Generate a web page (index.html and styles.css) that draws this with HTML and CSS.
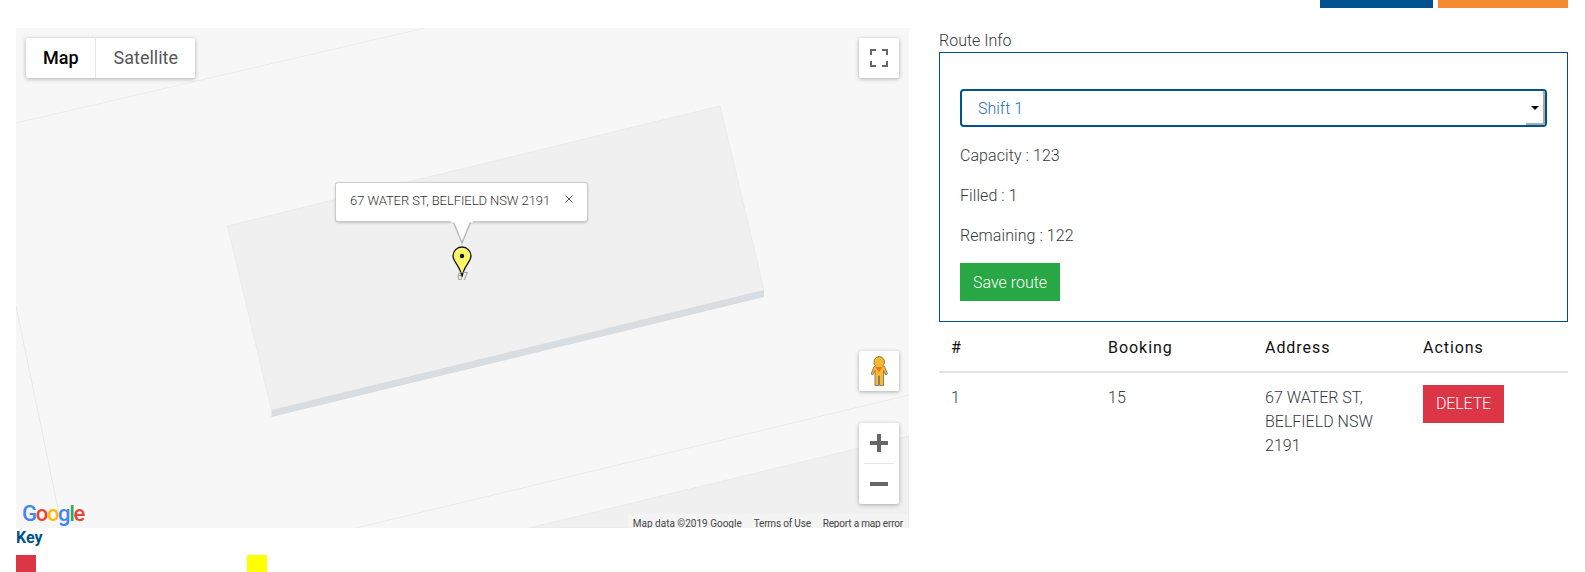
FILE: index.html
```html
<!DOCTYPE html>
<html lang="en">
<head>
<meta charset="utf-8">
<title>Route Info</title>
<link rel="stylesheet" href="styles.css">
</head>
<body>
<div class="topbar">
  <span class="top-btn top-blue"></span>
  <span class="top-btn top-orange"></span>
</div>
<main class="main">
  <section class="left">
    <div class="map">
      <svg class="map-bg" viewBox="0 0 893 500" aria-hidden="true">
        <rect width="893" height="500" fill="#f7f7f7"/>
        <path d="M0 95 L409 0" stroke="#ececec" fill="none"/>
        <path d="M0 278 L46 500" stroke="#e8e8e8" fill="none"/>
        <path d="M340 500 L893 367" stroke="#ebebeb" fill="none"/>
        <path d="M513 500 L893 408 V500 Z" fill="#f0f0f0" stroke="#ebebeb"/>
        <path d="M211.500 198 L704 78 L748 262 L255.500 382 Z" fill="#f0f0f0" stroke="#ebebeb"/>
        <path d="M255.500 382 L748 262 V269 L255.500 389 Z" fill="#d8dde2"/>
      </svg>
      <div class="map-type">
        <span class="type-btn type-on">Map</span>
        <span class="type-btn type-off">Satellite</span>
      </div>
      <button class="ctl ctl-full" aria-label="Fullscreen">
        <svg width="18" height="18" viewBox="0 0 18 18"><path d="M1 6V1H6M12 1H17V6M17 12V17H12M6 17H1V12" fill="none" stroke="#666" stroke-width="2"/></svg>
      </button>
      <button class="ctl ctl-peg" aria-label="Street View">
        <svg class="peg" width="18" height="30" viewBox="0 0 18 30"><path d="M9 .5a5.500 5.500 0 0 1 3.900 9.400l1.600.6 2.900 7.500-1.700.8-2.200-4.300V29.500H9.500V20h-1v9.500H5V14.500l-2.200 4.300-1.700-.8 2.900-7.500 1.600-.6A5.500 5.500 0 0 1 9 .5Z" fill="#fdb827" stroke="#8a7f6a"/><path d="M5.500 11H12.500L9 16.500Z" fill="#e8772e"/></svg>
      </button>
      <div class="ctl ctl-zoom">
        <span class="zoom-btn"><svg width="18" height="18" viewBox="0 0 18 18"><path d="M7 0h4v7h7v4h-7v7H7v-7H0V7h7Z" fill="#666"/></svg></span>
        <span class="zoom-sep"></span>
        <span class="zoom-btn"><svg width="18" height="18" viewBox="0 0 18 18"><path d="M0 7h18v4H0Z" fill="#666"/></svg></span>
      </div>
      <div class="bubble">
        <span class="bubble-text">67 WATER ST, BELFIELD NSW 2191</span>
        <svg class="bubble-close" width="8" height="8" viewBox="0 0 8 8" aria-hidden="true"><path d="M.5.500 7.500 7.500M7.500.500 .5 7.500" stroke="#555" fill="none"/></svg>
      </div>
      <svg class="bubble-tail" width="22" height="24" viewBox="0 0 22 24" aria-hidden="true"><path d="M2 0 L11 22 L20 0 Z" fill="#fff" stroke="#bbb" stroke-width="1.500"/><path d="M0 .5H22" stroke="#fff" stroke-width="2"/></svg>
      <svg class="pin" width="20" height="32" viewBox="0 0 20 32" aria-hidden="true"><path d="M10 1a9 9 0 0 1 9 9c0 6-7 9-9 21C8 19 1 16 1 10a9 9 0 0 1 9-9Z" fill="#fdf569" stroke="#111" stroke-width="1.300"/><circle cx="10" cy="10" r="2.200" fill="#111"/></svg>
      <span class="pin-label">67</span>
      <span class="google"><b class="g-b">G</b><b class="g-r">o</b><b class="g-y">o</b><b class="g-b">g</b><b class="g-g">l</b><b class="g-r">e</b></span>
      <div class="attrib">
        <span>Map data ©2019 Google</span>
        <span class="tight">Terms of Use</span>
        <span class="tight">Report a map error</span>
      </div>
    </div>
    <div class="key">
      <div class="key-title">Key</div>
      <div class="key-row">
        <span class="swatch swatch-red"></span>
        <span class="swatch swatch-yellow"></span>
      </div>
    </div>
  </section>
  <section class="right">
    <div class="route-label">Route Info</div>
    <div class="route-box">
      <div class="select">
        <span>Shift 1</span>
        <span class="select-arrow"></span>
      </div>
      <p class="stat">Capacity : 123</p>
      <p class="stat">Filled : 1</p>
      <p class="stat stat-last">Remaining : 122</p>
      <button class="btn btn-save">Save route</button>
    </div>
    <table class="table">
      <thead>
        <tr><th class="c-a">#</th><th class="c-a">Booking</th><th class="c-b">Address</th><th>Actions</th></tr>
      </thead>
      <tbody>
        <tr>
          <td>1</td>
          <td>15</td>
          <td>67 WATER ST, BELFIELD NSW 2191</td>
          <td><button class="btn btn-delete">DELETE</button></td>
        </tr>
      </tbody>
    </table>
  </section>
</main>
</body>
</html>
```
FILE: styles.css
```css
* { box-sizing: border-box; }
html, body { margin: 0; padding: 0; height: 572px; overflow: hidden; background: #fff; }
body { font-family: Roboto, "Liberation Sans", sans-serif; font-weight: 300; font-size: 16px; line-height: 24px; color: #343a40; }

.topbar { display: flex; justify-content: flex-end; gap: 5px; height: 8px; padding-right: 17px; }
.top-btn { display: block; height: 8px; }
.top-blue { width: 113px; background: #00528f; }
.top-orange { width: 130px; background: #f48b31; }

.main { display: flex; padding: 20px 17px 0 16px; gap: 30px; }
.left { width: 893px; flex: none; }
.right { flex: 1; min-width: 0; }

.map { position: relative; width: 893px; height: 500px; overflow: hidden; background: #f7f7f7; }
.map-bg { display: block; width: 893px; height: 500px; }

.map-type { position: absolute; left: 10px; top: 10px; display: flex; height: 40px; background: #fff; border-radius: 2px; box-shadow: 0 1px 4px rgba(0,0,0,.3); font-weight: 400; font-size: 18px; line-height: 40px; color: #565656; }
.type-btn { padding: 0 17px; }
.type-btn.type-on { padding-right: 16px; font-weight: 500; color: #000; border-right: 1px solid #e6e6e6; }
.type-btn.type-off { padding-left: 18px; }

.ctl { position: absolute; display: flex; align-items: center; justify-content: center; width: 40px; padding: 0; border: 0; background: #fff; border-radius: 2px; box-shadow: 0 1px 4px rgba(0,0,0,.3); }
.ctl-full { left: 843px; top: 10px; height: 40px; }
.ctl-peg { left: 843px; top: 323px; height: 40px; }
.peg { margin-right: 1px; }
.ctl-zoom { left: 843px; top: 395px; height: 81px; flex-direction: column; }
.zoom-btn { display: flex; align-items: center; justify-content: center; height: 40px; width: 40px; }
.zoom-sep { display: block; width: 30px; height: 1px; background: #e6e6e6; }

.bubble { position: absolute; left: 320px; top: 155px; display: flex; align-items: flex-start; width: 251px; height: 38px; padding: 9px 0 0 14px; background: #fff; border-radius: 2px; box-shadow: 0 0 0 1px #ccc, 0 1px 3px rgba(0,0,0,.4); font-size: 13px; font-weight: 300; line-height: 18px; letter-spacing: -.07px; color: #333; white-space: nowrap; }
.bubble-text { flex: 1; }
.bubble-close { flex: none; margin: 3px 14px 0 0; }
.bubble-tail { position: absolute; left: 435px; top: 193px; }
.pin { position: absolute; left: 436px; top: 218px; }
.pin-label { position: absolute; left: 441px; top: 243px; font-size: 10px; line-height: 12px; font-weight: 400; color: #999; }

.google { position: absolute; left: 6px; top: 474px; font-size: 22px; line-height: 24px; letter-spacing: -1.3px; }
.google b { font-weight: 500; }
.g-b { color: #4285f4; }
.g-r { color: #ea4335; }
.g-y { color: #fbbc05; }
.g-g { color: #34a853; }

.attrib { position: absolute; right: 1px; bottom: 0; display: flex; gap: 12px; height: 14px; overflow: hidden; padding: 0 5px; background: rgba(245,245,245,.7); font-size: 10px; font-weight: 400; line-height: 20px; color: #444; white-space: nowrap; }
.tight { letter-spacing: -.18px; }

.key { height: 44px; }
.key-title { font-weight: 700; font-size: 16px; line-height: 20px; color: #00528f; }
.key-row { display: flex; gap: 211px; padding-top: 7px; }
.swatch { display: block; width: 20px; height: 20px; }
.swatch-red { background: #dc3545; }
.swatch-yellow { background: #ff0; }

.route-label { height: 24px; padding-top: 1px; }
.route-box { height: 270px; border: 1px solid #00528f; padding: 36px 20px 0; }
.select { position: relative; display: flex; align-items: center; height: 38px; padding: 2px 0 0 16px; border: 2px solid #00528f; border-radius: 4px; color: #1f6fb5; }
.select-arrow { position: absolute; right: 6px; top: 15px; width: 0; height: 0; border: 4px solid transparent; border-top-color: #000; border-bottom: 0; }
.select::after { content: ""; position: absolute; right: 0; bottom: 0; width: 19px; height: 2px; background: #aaa; }
.select::before { content: ""; position: absolute; right: 0; top: 0; bottom: 0; width: 2px; background: #aaa; }
.stat { margin: 0 0 16px; letter-spacing: .07px; }
.select + .stat { margin-top: 17px; }
.stat-last { margin-bottom: 15px; }
.btn { display: block; border: 0; border-radius: 0; font-family: inherit; font-weight: 300; font-size: 16px; line-height: 24px; color: #fff; padding: 7px 13px; }
.btn-save { padding: 8px 13px 6px; background: #28a745; }
.btn-delete { margin-top: -1px; background: #dc3545; letter-spacing: -.15px; }

.table { width: 100%; border-collapse: collapse; table-layout: fixed; }
.table th { padding: 13px 12px 11px; height: 50px; text-align: left; font-weight: 400; letter-spacing: .95px; color: #111; border-bottom: 2px solid #dee2e6; }
.table td { padding: 13px 12px 12px; vertical-align: top; }
.c-a { width: 157px; }
.c-b { width: 158px; }
```
